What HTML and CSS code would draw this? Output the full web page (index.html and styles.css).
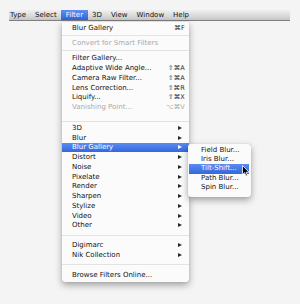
FILE: index.html
```html
<!DOCTYPE html>
<html>
<head>
<meta charset="utf-8">
<link rel="stylesheet" href="styles.css">
</head>
<body>
<div class="page">
  <div class="menubar">
    <span class="mb-item first">Type</span>
    <span class="mb-item">Select</span>
    <span class="mb-item active">Filter</span>
    <span class="mb-item">3D</span>
    <span class="mb-item">View</span>
    <span class="mb-item">Window</span>
    <span class="mb-item">Help</span>
  </div>

  <div class="menu">
    <div class="item"><span class="label">Blur Gallery</span><span class="key">⌘F</span></div>
    <div class="sep sep-a"></div>
    <div class="item disabled"><span class="label">Convert for Smart Filters</span></div>
    <div class="sep sep-a"></div>
    <div class="item"><span class="label">Filter Gallery...</span></div>
    <div class="item"><span class="label">Adaptive Wide Angle...</span><span class="key">⇧⌘A</span></div>
    <div class="item"><span class="label">Camera Raw Filter...</span><span class="key">⇧⌘A</span></div>
    <div class="item"><span class="label">Lens Correction...</span><span class="key">⇧⌘R</span></div>
    <div class="item"><span class="label">Liquify...</span><span class="key">⇧⌘X</span></div>
    <div class="item disabled"><span class="label">Vanishing Point...</span><span class="key">⌥⌘V</span></div>
    <div class="sep sep-c"></div>
    <div class="item"><span class="label">3D</span><span class="arrow"></span></div>
    <div class="item"><span class="label">Blur</span><span class="arrow"></span></div>
    <div class="item selected"><span class="label">Blur Gallery</span><span class="arrow"></span>
      <div class="submenu">
        <div class="sitem">Field Blur...</div>
        <div class="sitem">Iris Blur...</div>
        <div class="sitem selected">Tilt-Shift...</div>
        <div class="sitem">Path Blur...</div>
        <div class="sitem">Spin Blur...</div>
        <svg class="cursor" width="8" height="12" viewBox="0 0 8 12">
          <path d="M0.5 0.5 L0.5 9.5 L2.6 7.6 L4 11 L5.4 10.4 L4.1 7.2 L7 7.2 Z" fill="#000" stroke="#fff" stroke-width="0.8" stroke-linejoin="round"/>
        </svg>
      </div>
    </div>
    <div class="item"><span class="label">Distort</span><span class="arrow"></span></div>
    <div class="item"><span class="label">Noise</span><span class="arrow"></span></div>
    <div class="item"><span class="label">Pixelate</span><span class="arrow"></span></div>
    <div class="item"><span class="label">Render</span><span class="arrow"></span></div>
    <div class="item"><span class="label">Sharpen</span><span class="arrow"></span></div>
    <div class="item"><span class="label">Stylize</span><span class="arrow"></span></div>
    <div class="item"><span class="label">Video</span><span class="arrow"></span></div>
    <div class="item"><span class="label">Other</span><span class="arrow"></span></div>
    <div class="sep sep-b"></div>
    <div class="item"><span class="label">Digimarc</span><span class="arrow"></span></div>
    <div class="item"><span class="label">Nik Collection</span><span class="arrow"></span></div>
    <div class="sep sep-b"></div>
    <div class="item"><span class="label">Browse Filters Online...</span></div>
  </div>
</div>
</body>
</html>
```

FILE: styles.css
```css
html, body {
  margin: 0;
  padding: 0;
  background: #f4f4f4;
}
body {
  font-family: "DejaVu Sans", "Liberation Sans", sans-serif;
  font-size: 7px;
  color: #111;
}
.page {
  position: relative;
  width: 300px;
  height: 304px;
  padding-top: 10px;
  box-sizing: border-box;
}
.menubar {
  margin-left: 9px;
  width: 281px;
  height: 11px;
  display: flex;
  align-items: stretch;
  background: linear-gradient(#f0f0f0, #d9d9d9 60%, #c6c6c6);
  border-bottom: 1px solid #7e7e7e;
  box-sizing: border-box;
}
.mb-item {
  padding: 0 4.5px;
  line-height: 10px;
  color: #111;
}
.mb-item.first {
  padding-left: 1px;
}
.mb-item.active {
  background: linear-gradient(#5f8ff0, #2f63dc);
  color: #fff;
}
.menu {
  position: absolute;
  left: 62px;
  top: 22px;
  width: 127px;
  padding: 1.5px 0 2px;
  background: #fbfbfb;
  border-radius: 0 0 3px 3px;
  box-shadow: 0 3px 7px rgba(0, 0, 0, 0.35), 0 0 1px rgba(0, 0, 0, 0.25);
}
.item {
  position: relative;
  height: 9.75px;
  display: flex;
  align-items: center;
  padding: 0 4px 0 10px;
  white-space: nowrap;
}
.item .label {
  flex: 1;
}
.item .key {
  font-size: 6.5px;
  color: #2a2a2a;
  letter-spacing: 0.2px;
}
.item.disabled {
  color: #a9a9a9;
}
.item.disabled .key {
  color: #a9a9a9;
}
.item.selected {
  background: linear-gradient(#5a8bef, #3467df);
  color: #fff;
}
.arrow {
  width: 0;
  height: 0;
  margin-right: 3px;
  border-top: 2.5px solid transparent;
  border-bottom: 2.5px solid transparent;
  border-left: 4px solid #2a2a2a;
}
.item.selected .arrow {
  border-left-color: #fff;
}
.sep {
  display: flex;
  align-items: center;
}
.sep::after {
  content: "";
  flex: 1;
  height: 1px;
  background: #e3e3e3;
}
.sep-a {
  height: 5.25px;
}
.sep-b {
  height: 10px;
}
.sep-c {
  height: 11px;
  align-items: flex-end;
  padding-bottom: 1px;
  box-sizing: border-box;
}
.submenu {
  position: absolute;
  left: 126px;
  top: 1.5px;
  width: 63px;
  padding: 1.5px 0 4.5px;
  background: #fbfbfb;
  border-radius: 3px;
  box-shadow: 0 3px 7px rgba(0, 0, 0, 0.35), 0 0 1px rgba(0, 0, 0, 0.25);
  color: #111;
}
.sitem {
  height: 9.4px;
  line-height: 9.4px;
  padding-left: 12px;
  margin: 0 2px 0 1px;
}
.sitem.selected {
  background: linear-gradient(#5a8bef, #3467df);
  color: #fff;
}
.cursor {
  position: absolute;
  left: 54px;
  top: 21px;
}
```
